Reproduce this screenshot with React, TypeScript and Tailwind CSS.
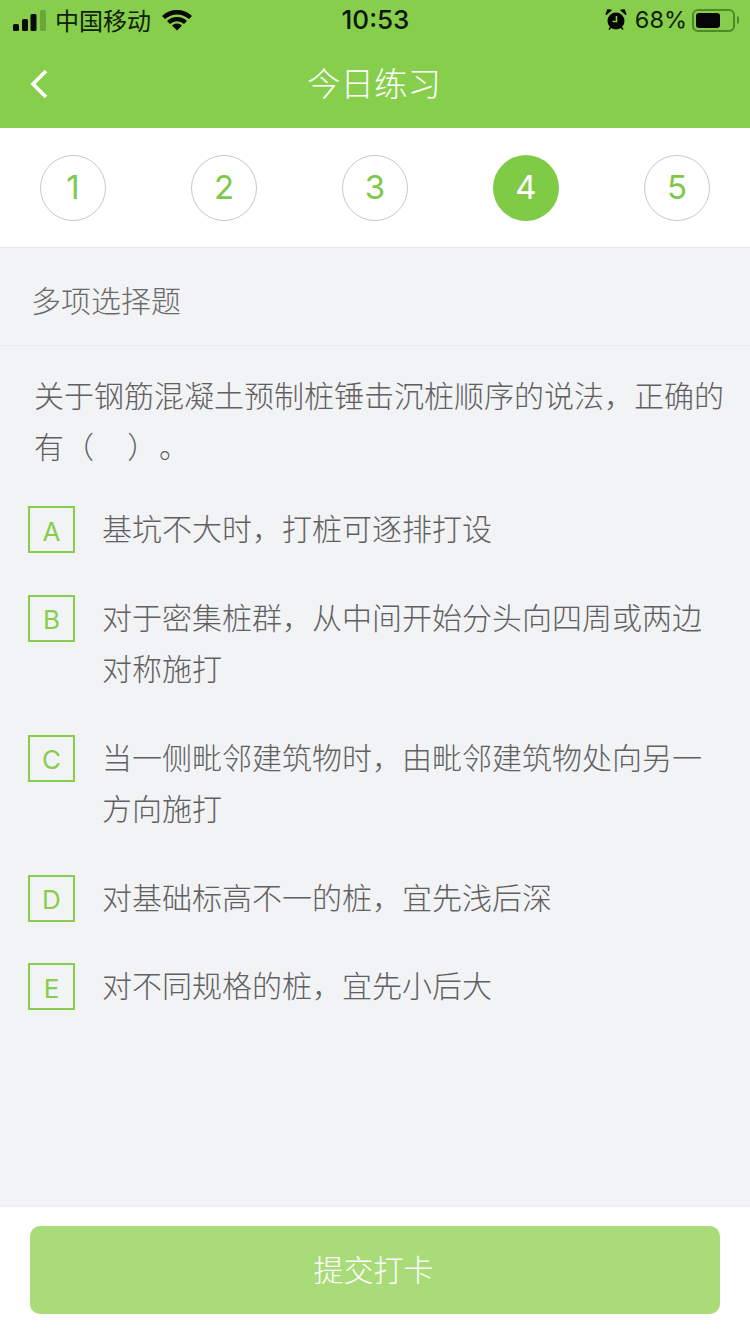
import React from "react";

const CJK = "font-['Noto_Sans_CJK_SC','Noto_Sans',sans-serif]";
const LATIN = "font-['Inter','Liberation_Sans','Noto_Sans_CJK_SC',sans-serif]";

const steps = [1, 2, 3, 4, 5];

const options = [
  { key: "A", text: "基坑不大时，打桩可逐排打设" },
  { key: "B", text: "对于密集桩群，从中间开始分头向四周或两边对称施打" },
  { key: "C", text: "当一侧毗邻建筑物时，由毗邻建筑物处向另一方向施打" },
  { key: "D", text: "对基础标高不一的桩，宜先浅后深" },
  { key: "E", text: "对不同规格的桩，宜先小后大" },
];

function StatusBar() {
  return (
    <div className="h-[40px] pl-[13px] pr-[11px] flex items-center justify-between text-black">
      <div className="flex items-center w-[219px]">
        {/* signal */}
        <svg width="34" height="21" viewBox="0 0 34 21" className="shrink-0">
          <rect x="0" y="14" width="6" height="7" rx="1.5" fill="#0b0b0b" />
          <rect x="9" y="9" width="6" height="12" rx="1.5" fill="#0b0b0b" />
          <rect x="17.5" y="4" width="6" height="17" rx="1.5" fill="#0b0b0b" />
          <rect x="27" y="0" width="6" height="21" rx="1.5" fill="#5f9a35" opacity="0.75" />
        </svg>
        <span className={`${CJK} text-[24px] leading-none ml-[8px] whitespace-nowrap text-[#10200a]`}>中国移动</span>
        {/* wifi */}
        <svg width="30" height="22" viewBox="0 0 30 22" className="ml-[11px] shrink-0">
          <path d="M1.5 8.5 A20 20 0 0 1 28.5 8.5" fill="none" stroke="#050505" strokeWidth="4.4" />
          <path d="M6.5 13.5 A12.5 12.5 0 0 1 23.5 13.5" fill="none" stroke="#050505" strokeWidth="4.4" />
          <path d="M10 16.5 A7 7 0 0 1 20 16.5 L15 21.5 Z" fill="#050505" />
        </svg>
      </div>
      <span className={`${LATIN} text-[26px] leading-none font-medium text-[#0c1608]`}>10:53</span>
      <div className="flex items-center justify-end w-[220px]">
        {/* alarm */}
        <svg width="22" height="22" viewBox="0 0 22 22" className="shrink-0">
          <circle cx="11" cy="12" r="8.5" fill="#050505" />
          <path d="M1 5.5 L5.5 1.5 L3 1 Z M21 5.5 L16.5 1.5 L19 1 Z" fill="#050505" stroke="#050505" strokeWidth="1.6" />
          <path d="M4 20.5 L6 18 M18 20.5 L16 18" stroke="#050505" strokeWidth="1.6" />
          <path d="M11.5 7 V12.5 H7.5" fill="none" stroke="#86CE4B" strokeWidth="1.6" />
        </svg>
        <span className={`${LATIN} text-[23.5px] leading-none ml-[8px] text-[#10200a]`}>68%</span>
        {/* battery */}
        <div className="ml-[5px] w-[43px] h-[23px] rounded-[6px] border-2 border-[#4d8a2a] p-[2px] flex shrink-0">
          <div className="w-[24px] h-full rounded-[3px] bg-[#050505]" />
        </div>
        <div className="ml-[2px] w-[2px] h-[8px] rounded-r-full bg-[#4d8a2a]" />
      </div>
    </div>
  );
}

export default function App() {
  return (
    <div className={`${CJK} w-[750px] h-[1334px] flex flex-col bg-[#f2f3f5] overflow-hidden`}>
      {/* Header */}
      <div className="bg-[#86ce4b] h-[128px] shrink-0">
        <StatusBar />
        <div className="relative h-[88px] flex items-center justify-center">
          <svg width="20" height="30" viewBox="0 0 20 30" className="absolute left-[29px] top-[29px]">
            <path d="M17 2 L4 15 L17 28" fill="none" stroke="#fff" strokeWidth="3.6" />
          </svg>
          <span className="text-[33.5px] font-light leading-none text-white mt-[-4px] mr-[2px]">今日练习</span>
        </div>
      </div>

      {/* Steps */}
      <div className="bg-white h-[120px] shrink-0 px-[40px] pt-[1px] flex items-center justify-between border-b border-[#e9eaec]">
        {steps.map((n) => (
          <div
            key={n}
            className={`${LATIN} w-[66px] h-[66px] rounded-full flex items-center justify-center text-[33px] ${
              n === 4 ? "bg-[#7fcb46] text-white" : "border border-[#c9c9c9] text-[#80c84c]"
            }`}
          >
            {n}
          </div>
        ))}
      </div>

      {/* Question type */}
      <div className="h-[98px] shrink-0 pl-[31px] pt-[6px] flex items-center border-b border-[#e9eaec] text-[30px] font-light text-[#6a6a6a]">
        多项选择题
      </div>

      {/* Question */}
      <div className="flex-1 min-h-0">
        <p className="mt-[23px] ml-[34px] mr-[25px] text-[30px] font-light leading-[51px] text-[#606060]">
          关于钢筋混凝土预制桩锤击沉桩顺序的说法，正确的有（&nbsp;&nbsp;&nbsp;&nbsp;&nbsp;）&#8202;。
        </p>
        <div className="mt-[31px] pl-[28px] pr-[40px] flex flex-col gap-[37px]">
          {options.map((o) => (
            <div key={o.key} className="flex items-start">
              <div
                className={`${LATIN} mt-[4px] pt-[3px] w-[47px] h-[47px] shrink-0 border-2 border-[#86ce4b] flex items-center justify-center text-[26px] text-[#86ce4b]`}
              >
                {o.key}
              </div>
              <div className="ml-[27px] text-[30px] font-light leading-[51.5px] text-[#606060]">{o.text}</div>
            </div>
          ))}
        </div>
      </div>

      {/* Submit */}
      <div className="bg-white h-[128px] shrink-0 border-t border-[#eceded] px-[30px] pt-[19px]">
        <button className="w-full h-[88px] rounded-[10px] bg-[#a9dc78] text-white text-[30px] font-light pr-[3px] pb-[4px] flex items-center justify-center">
          提交打卡
        </button>
      </div>
    </div>
  );
}
